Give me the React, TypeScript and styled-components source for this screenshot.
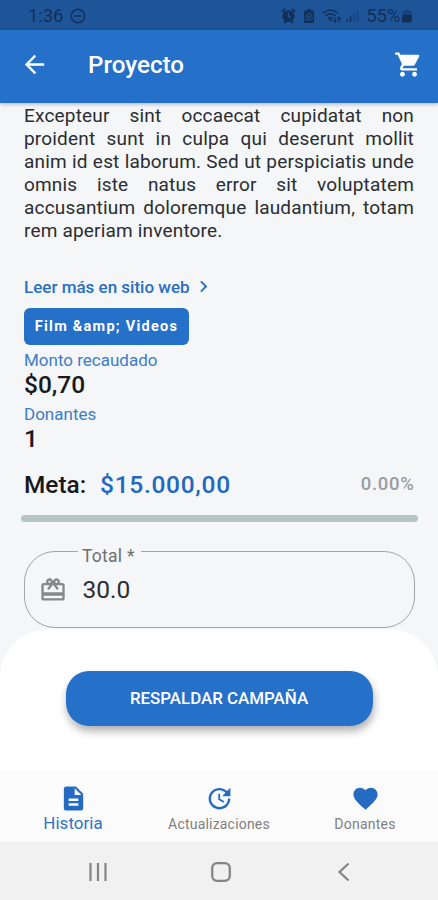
import React from "react";
import styled, { createGlobalStyle } from "styled-components";
import {
  MdArrowBack,
  MdShoppingCart,
  MdChevronRight,
  MdOutlineRedeem,
  MdDescription,
  MdUpdate,
  MdFavorite,
} from "react-icons/md";

const blue = "#2570c9";
const ink = "#17191c";
const surface = "#f4f6f8";

const GlobalStyle = createGlobalStyle`
  * { box-sizing: border-box; }
  body { margin: 0; background: ${surface}; font-family: Roboto, "Liberation Sans", sans-serif; }
`;

const Screen = styled.div`
  width: 438px;
  height: 900px;
  display: flex;
  flex-direction: column;
  overflow: hidden;
  background: ${surface};
`;

const Label = styled.span<{ $size: number; $weight?: number; $ls?: number; $color?: string; $lh?: number }>`
  display: block;
  white-space: nowrap;
  font-size: ${(p) => p.$size}px;
  font-weight: ${(p) => p.$weight ?? 400};
  letter-spacing: ${(p) => p.$ls ?? 0}px;
  color: ${(p) => p.$color ?? ink};
  line-height: ${(p) => p.$lh ?? 22}px;
`;

const StatusBar = styled.header`
  flex: none;
  height: 30px;
  padding: 2px 26px 0 28px;
  display: flex;
  align-items: center;
  justify-content: space-between;
  background: #1e5598;
`;

const StatusGroup = styled.div<{ $gap: number }>`
  display: flex;
  align-items: center;
  gap: ${(p) => p.$gap}px;
  svg { display: block; }
`;

const AppBar = styled.div`
  flex: none;
  z-index: 1;
  height: 72.5px;
  padding: 0 15px 4px 20px;
  display: flex;
  align-items: center;
  color: #fff;
  background: ${blue};
  box-shadow: 0 1px 4px rgba(0, 0, 0, 0.3);
`;

const Title = styled(Label)`
  flex: 1;
  margin-left: 39px;
  padding-top: 1px;
`;

const Content = styled.main`
  flex: none;
  height: 526px;
  padding: 1.5px 23px 0 24px;
`;

const Paragraph = styled.p`
  margin: 0;
  width: 390px;
`;

const Line = styled.span<{ $last?: boolean }>`
  display: block;
  height: 23.1px;
  line-height: 23.1px;
  font-size: 19px;
  letter-spacing: 0.18px;
  color: #2b2d30;
  text-align: justify;
  text-align-last: ${(p) => (p.$last ? "left" : "justify")};
`;

const Link = styled.a`
  margin-top: 32.4px;
  height: 24px;
  display: flex;
  align-items: center;
  gap: 2px;
  color: #2a6fc0;
`;

const Chip = styled.div`
  margin: 9px 0 5px;
  width: 165px;
  height: 37px;
  padding-top: 2px;
  border-radius: 6px;
  display: flex;
  align-items: center;
  justify-content: center;
  background: ${blue};
`;

const Stat = styled.div`
  margin-bottom: 5px;
`;

const GoalRow = styled.div`
  margin-top: 18px;
  height: 30px;
  display: flex;
  align-items: center;
`;

const GoalValue = styled(Label)`
  margin-left: 14px;
`;

const Percent = styled(Label)`
  margin: 0 0.5px 2px auto;
`;

const Track = styled.div`
  margin: 15.5px -3px 0;
  height: 6.5px;
  border-radius: 4px;
  background: #b5c6c5;
`;

const Field = styled.div`
  position: relative;
  margin-top: 29.5px;
  margin-left: -0.5px;
  height: 77px;
  padding: 0 14px;
  border: 1px solid #a2a4a6;
  border-radius: 31px;
  display: flex;
  align-items: center;
  gap: 16px;
  color: #85878a;
`;

const FieldLabel = styled(Label)`
  position: absolute;
  top: -7px;
  left: 53.5px;
  padding: 0 6px 0 4px;
  background: ${surface};
`;

const Sheet = styled.section`
  flex: none;
  height: 142.5px;
  padding-top: 42px;
  display: flex;
  justify-content: center;
  align-items: flex-start;
  border-radius: 49px 49px 0 0;
  background: #fff;
`;

const Action = styled.button`
  width: 307px;
  height: 55.5px;
  padding: 0 0 1px;
  border: 0;
  border-radius: 23px;
  font-family: inherit;
  background: ${blue};
  box-shadow: 1px 5px 8px rgba(0, 0, 0, 0.32);
`;

const Tabs = styled.nav`
  flex: none;
  height: 71px;
  display: grid;
  grid-template-columns: repeat(3, 1fr);
  background: #fbfbfb;
`;

const Tab = styled.div`
  padding-top: 12.6px;
  display: flex;
  flex-direction: column;
  align-items: center;
  color: #246bc1;
  svg { display: block; flex: none; }
`;

const ActiveLabel = styled(Label)`
  margin-top: -1px;
`;

const SystemBar = styled.footer`
  flex: 1;
  padding: 2px 88px 0;
  display: flex;
  align-items: center;
  justify-content: space-between;
  background: #f1f1f1;
  svg { display: block; }
`;

const HomeIcon = styled.svg`
  margin-right: 4px;
`;

const lines = [
  "Excepteur sint occaecat cupidatat non",
  "proident sunt in culpa qui deserunt mollit",
  "anim id est laborum. Sed ut perspiciatis unde",
  "omnis iste natus error sit voluptatem",
  "accusantium doloremque laudantium, totam",
  "rem aperiam inventore.",
];

const dark = "#122f58";

const DoNotDisturb = () => (
  <svg width="16" height="16" viewBox="0 0 16 16" fill="none" stroke={dark} strokeWidth="1.5">
    <circle cx="8" cy="8" r="6.7" />
    <path d="M4.5 8h7" />
  </svg>
);

const Alarm = () => (
  <svg width="15" height="16" viewBox="0 0 15 16">
    <path d="M1 4l3-3M14 4l-3-3M3 15l2-2M12 15l-2-2" stroke={dark} strokeWidth="1.8" />
    <circle cx="7.5" cy="8.3" r="6" fill={dark} />
    <path d="M7.5 4.8v3.8l2.6 1" fill="none" stroke="#1e5598" strokeWidth="1.3" />
  </svg>
);

const Saver = () => (
  <svg width="12" height="16" viewBox="0 0 12 16">
    <path d="M4 1h4v1.5h1.5A1.5 1.5 0 0 1 11 4v9.5a1.5 1.5 0 0 1-1.5 1.5h-7A1.5 1.5 0 0 1 1 13.5V4a1.5 1.5 0 0 1 1.5-1.5H4z" fill={dark} />
    <path d="M6 4.5L9 8v4H3V8z" fill="none" stroke="#1e5598" strokeWidth="1" />
    <path d="M6 7.5v3M4.5 9h3" stroke="#1e5598" />
  </svg>
);

const Wifi = () => (
  <svg width="20" height="16" viewBox="0 0 20 16" fill="none" stroke={dark} strokeWidth="1.4">
    <path d="M1 5.2Q8.5-1.4 16 5.2M3.4 8Q8.5 3.6 13.6 8M6 10.5Q8.5 8.5 11 10.5" />
    <path d="M8.5 11v2" strokeWidth="2" />
    <path d="M13 9.5v4.5M11.5 12.5L13 14.2l1.5-1.7M17 14V9.5M15.5 11L17 9.3l1.5 1.7" strokeWidth="1.2" />
  </svg>
);

const Signal = () => (
  <svg width="14" height="16" viewBox="0 0 14 16" stroke={dark} strokeWidth="1.5">
    <path d="M2 14v-3M5.5 14V8.5" />
    <path d="M9 14V5.5M12.5 14V2" opacity=".4" />
  </svg>
);

const Battery = () => (
  <svg width="10" height="16" viewBox="0 0 10 16">
    <path d="M3 1.5h4V4H3z" fill={dark} opacity=".45" />
    <path d="M0 4.5A1.5 1.5 0 0 1 1.5 3h7A1.5 1.5 0 0 1 10 4.5V8H0z" fill={dark} opacity=".45" />
    <path d="M0 7h10v6a1.5 1.5 0 0 1-1.5 1.5h-7A1.5 1.5 0 0 1 0 13z" fill={dark} />
  </svg>
);

export default function App() {
  return (
    <>
      <GlobalStyle />
      <Screen>
        <StatusBar>
          <StatusGroup $gap={7}>
            <Label $size={18.5} $color={dark} $ls={-0.1}>1:36</Label>
            <DoNotDisturb />
          </StatusGroup>
          <StatusGroup $gap={7}>
            <Alarm />
            <Saver />
            <StatusGroup $gap={3}>
              <Wifi />
              <Signal />
            </StatusGroup>
            <StatusGroup $gap={2}>
              <Label $size={18.5} $color={dark} $ls={-0.2}>55%</Label>
              <Battery />
            </StatusGroup>
          </StatusGroup>
        </StatusBar>
        <AppBar>
          <MdArrowBack size={29} />
          <Title $size={24.2} $weight={500} $color="#fff" $lh={30}>Proyecto</Title>
          <MdShoppingCart size={29} />
        </AppBar>
        <Content>
          <Paragraph>
            {lines.map((t, i) => (
              <Line key={t} $last={i === lines.length - 1}>{t}</Line>
            ))}
          </Paragraph>
          <Link>
            <Label $size={17} $weight={500} $color="#2a6fc0">Leer más en sitio web</Label>
            <MdChevronRight size={23} />
          </Link>
          <Chip>
            <Label $size={14.5} $weight={700} $ls={1.25} $color="#fff">Film &amp;amp; Videos</Label>
          </Chip>
          <Stat>
            <Label $size={17} $color="#3f7cc6" $lh={21}>Monto recaudado</Label>
            <Label $size={24.5} $weight={500} $lh={27}>$0,70</Label>
          </Stat>
          <Stat>
            <Label $size={17} $color="#3f7cc6" $lh={22}>Donantes</Label>
            <Label $size={24.5} $weight={500} $lh={27}>1</Label>
          </Stat>
          <GoalRow>
            <Label $size={24.4} $weight={500} $lh={30}>Meta:</Label>
            <GoalValue $size={24.5} $weight={500} $ls={0.7} $color="#2169bf" $lh={30}>$15.000,00</GoalValue>
            <Percent $size={18.5} $weight={500} $ls={0.7} $color="#9b9da0">0.00%</Percent>
          </GoalRow>
          <Track />
          <Field>
            <FieldLabel $size={17.5} $ls={0.25} $color="#6d6f72">Total *</FieldLabel>
            <MdOutlineRedeem size={28} />
            <Label $size={24.5} $lh={30} $color="#2b2d30">30.0</Label>
          </Field>
        </Content>
        <Sheet>
          <Action>
            <Label $size={16.9} $weight={500} $color="#fff">RESPALDAR CAMPAÑA</Label>
          </Action>
        </Sheet>
        <Tabs>
          <Tab>
            <MdDescription size={29} />
            <ActiveLabel $size={17} $color="#3273c3">Historia</ActiveLabel>
          </Tab>
          <Tab>
            <MdUpdate size={29} />
            <Label $size={14} $ls={0.2} $color="#808080">Actualizaciones</Label>
          </Tab>
          <Tab>
            <MdFavorite size={29} />
            <Label $size={14} $ls={0.25} $color="#808080">Donantes</Label>
          </Tab>
        </Tabs>
        <SystemBar>
          <svg width="20" height="20" viewBox="0 0 20 20" stroke="#858585" strokeWidth="2.2">
            <path d="M2.5 1v18M10 1v18M17.5 1v18" />
          </svg>
          <HomeIcon width="20" height="20" viewBox="0 0 20 20" fill="none" stroke="#858585" strokeWidth="2.3">
            <rect x="1.2" y="1.2" width="17.6" height="17.6" rx="5" />
          </HomeIcon>
          <svg width="13" height="20" viewBox="0 0 13 20" fill="none" stroke="#858585" strokeWidth="2.2">
            <path d="M11.5 1.5L2.5 10l9 8.5" />
          </svg>
        </SystemBar>
      </Screen>
    </>
  );
}
